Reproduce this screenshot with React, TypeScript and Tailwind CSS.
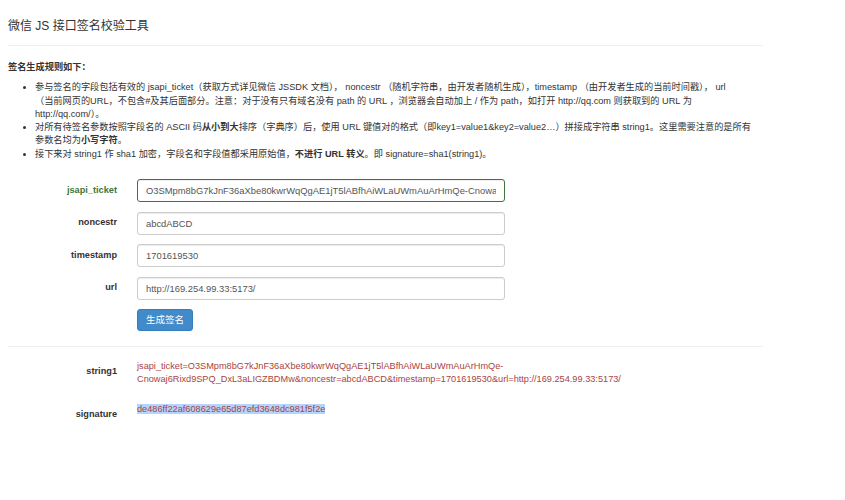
const TICKET =
  "O3SMpm8bG7kJnF36aXbe80kwrWqQgAE1jT5lABfhAiWLaUWmAuArHmQe-Cnowaj6Rixd9SPQ_DxL3aLIGZBDMw";

const fields = [
  { name: "jsapi_ticket", value: TICKET, active: true },
  { name: "noncestr", value: "abcdABCD" },
  { name: "timestamp", value: "1701619530" },
  { name: "url", value: "http://169.254.99.33:5173/" },
];

export default function App() {
  return (
    <div className="min-h-screen bg-white text-[#333] font-['Liberation_Sans','Noto_Sans_CJK_SC',sans-serif] text-[9.2px] leading-[13.3px]">
      <div className="w-[755px] ml-[8px]">
        {/* Header */}
        <h1 className="pt-[19px] text-[12px] leading-[14px] font-normal">微信 JS 接口签名校验工具</h1>
        <hr className="mt-[12px] border-0 border-t border-[#eee]" />

        {/* Rules */}
        <p className="mt-[15px] font-bold">签名生成规则如下：</p>
        <ul className="mt-[7px] pl-[27px] list-disc">
          <li>
            参与签名的字段包括有效的 jsapi_ticket（获取方式详见微信 JSSDK 文档）， noncestr
            （随机字符串，由开发者随机生成），timestamp （由开发者生成的当前时间戳）， url
            <br />
            （当前网页的URL，不包含#及其后面部分。注意：对于没有只有域名没有 path 的 URL
            ，浏览器会自动加上 / 作为 path，如打开 http://qq.com 则获取到的 URL 为
            <br />
            http://qq.com/）。
          </li>
          <li>
            对所有待签名参数按照字段名的 ASCII 码<b>从小到大</b>排序（字典序）后，使用 URL
            键值对的格式（即key1=value1&amp;key2=value2…）拼接成字符串 string1。这里需要注意的是所有
            <br />
            参数名均为<b>小写字符</b>。
          </li>
          <li>
            接下来对 string1 作 sha1 加密，字段名和字段值都采用原始值，<b>不进行 URL 转义</b>。即
            signature=sha1(string1)。
          </li>
        </ul>

        {/* Form */}
        <form className="mt-[18px]" onSubmit={(e) => e.preventDefault()}>
          {fields.map((f) => (
            <div key={f.name} className="flex items-center mb-[9.5px]">
              <label
                className={`w-[109px] text-right font-bold ${f.active ? "text-[#3c763d]" : "text-[#333]"}`}
              >
                {f.name}
              </label>
              <input
                readOnly
                value={f.value}
                className={`ml-[20px] w-[368px] h-[23px] px-[8px] rounded-[3px] border bg-white text-[#555] text-[9.4px] shadow-[inset_0_1px_1px_rgba(0,0,0,0.075)] outline-none ${
                  f.active ? "border-[#3c763d]" : "border-[#ccc]"
                }`}
              />
            </div>
          ))}
          <div className="pl-[129px]">
            <button
              type="submit"
              className="h-[22px] px-[8px] rounded-[3px] bg-[#428bca] border border-[#357ebd] text-white text-[9.5px]"
            >
              生成签名
            </button>
          </div>
        </form>

        <hr className="mt-[15px] border-0 border-t border-[#eee]" />

        {/* Result */}
        <div className="mt-[13px] flex">
          <div className="w-[109px] pt-[5px] text-right font-bold">string1</div>
          <div className="ml-[20px] text-[#a94442] whitespace-nowrap">
            <div>jsapi_ticket=O3SMpm8bG7kJnF36aXbe80kwrWqQgAE1jT5lABfhAiWLaUWmAuArHmQe-</div>
            <div>
              Cnowaj6Rixd9SPQ_DxL3aLIGZBDMw&amp;noncestr=abcdABCD&amp;timestamp=1701619530&amp;url=http://169.254.99.33:5173/
            </div>
          </div>
        </div>
        <div className="mt-[16px] flex">
          <div className="w-[109px] pt-[5px] text-right font-bold">signature</div>
          <div className="ml-[20px] text-[#a94442]">
            <span className="bg-[#b3d4fc]">de486ff22af608629e65d87efd3648dc981f5f2e</span>
          </div>
        </div>
      </div>
    </div>
  );
}
